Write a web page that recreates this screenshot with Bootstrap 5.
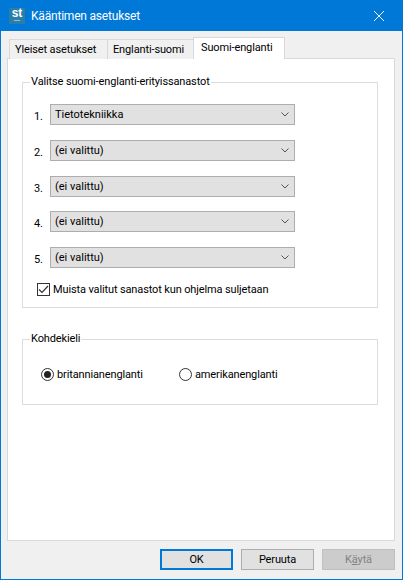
<!DOCTYPE html>
<html lang="fi">
<head>
    <meta charset="UTF-8">
    <meta name="viewport" content="width=device-width, initial-scale=1.0">
    <title>Kääntimen asetukset</title>
    <link href="https://cdn.jsdelivr.net/npm/bootstrap@5.3.0/dist/css/bootstrap.min.css" rel="stylesheet">
    <style>
        html, body {
            height: 100%;
            margin: 0;
            overflow: hidden;
        }
        body {
            background: #f0f0f0;
            color: #000;
            font: 11px/16px Roboto, "Liberation Sans", sans-serif;
            letter-spacing: -.13px;
        }
        .win {
            width: 403px;
            height: 580px;
            border: 1px solid #0078d7;
            border-top: 0;
        }
        .win-title {
            height: 31px;
            background: #0078d7;
            color: #fff;
            padding-left: 8px;
        }
        .win-title-text {
            font-size: 12px;
            letter-spacing: -.2px;
            margin-left: 6px;
        }
        .app-icon {
            width: 16px;
            height: 16px;
            background: #2b7ea8;
            color: #fff;
            font: bold 12px/11px "Liberation Sans", sans-serif;
        }
        .app-icon-line {
            width: 6px;
            height: 1px;
            margin-top: 1px;
            background: #8fc0d8;
        }
        .close-x {
            width: 46px;
        }
        .win-body {
            padding: 7px 7px 0 6px;
        }
        .tabs-row {
            border: 0;
            height: 21px;
            padding-left: 3px;
            position: relative;
            z-index: 1;
        }
        .tabs-row .nav-link {
            height: 20px;
            margin-top: 1px;
            padding: 2px 0 0 5px;
            color: #000;
            background: #f0f0f0;
            border: 1px solid #d9d9d9;
            border-bottom: 0;
            border-radius: 0;
            font-size: 11px;
            margin-left: -1px;
        }
        .tabs-row .nav-link.active {
            height: 22px;
            margin-top: -1px;
            padding: 2px 0 0 7px;
            background: #fff;
            border-color: #d9d9d9;
            color: #000;
        }
        .tab-first {
            width: 99px;
        }
        .tab-second {
            width: 87px;
        }
        .tab-third {
            width: 92px;
        }
        .tab-pane-box {
            height: 483px;
            margin-top: -1px;
            background: #fff;
            border: 1px solid #d9d9d9;
            padding: 15px 16px 0 14px;
        }
        .group-box {
            border: 1px solid #dcdcdc;
            padding: 0;
            margin-bottom: 23px;
        }
        .group-box legend {
            font-size: 11px;
            line-height: 16px;
            margin: 0 0 0 7px;
            padding: 0 1px;
        }
        .vocab-group {
            height: 234px;
        }
        .lang-group {
            height: 74px;
        }
        .vocab-rows {
            padding: 14px 0 0 11px;
            row-gap: 14.75px;
        }
        .vocab-num {
            width: 16px;
            padding-top: 5px;
            font-size: 11px;
        }
        .vocab-select {
            width: 245px;
            height: 21px;
            padding: 1px 20px 0 4px;
            font-size: 11px;
            line-height: 18px;
            color: #000;
            background-color: #e1e1e1;
            background-image: url("data:image/svg+xml,%3csvg xmlns='http://www.w3.org/2000/svg' viewBox='0 0 8 5'%3e%3cpath fill='none' stroke='%23555' d='M.5.5 4 4 7.5.5'/%3e%3c/svg%3e");
            background-size: 8px 5px;
            background-position: right 5px center;
            border: 1px solid #adadad;
            border-radius: 0;
        }
        .remember-row {
            min-height: 0;
            padding: 0;
            margin: -2px 0 0 3px;
            white-space: nowrap;
        }
        .form-check-label {
            padding-top: 1px;
        }
        .win-check {
            float: none !important;
            flex: none;
            width: 13px;
            height: 13px;
            margin: 0 3px 0 0 !important;
            background-color: #fff;
            border: 1px solid #333;
        }
        .win-check[type=checkbox] {
            border-radius: 0;
        }
        .win-check:checked {
            background-color: #fff;
            border-color: #333;
        }
        .win-check[type=checkbox]:checked {
            background-image: url("data:image/svg+xml,%3csvg xmlns='http://www.w3.org/2000/svg' viewBox='0 0 13 13'%3e%3cpath fill='none' stroke='%23333' stroke-width='1.2' d='M2 6.5 5 9.5 11 3'/%3e%3c/svg%3e");
            background-size: 13px 13px;
        }
        .win-check[type=radio]:checked {
            background-image: url("data:image/svg+xml,%3csvg xmlns='http://www.w3.org/2000/svg' viewBox='0 0 13 13'%3e%3ccircle cx='6.5' cy='6.5' r='3.5' fill='%23222'/%3e%3c/svg%3e");
            background-size: 13px 13px;
        }
        .lang-row {
            padding: 19px 0 0 18px;
        }
        .lang-row .form-check {
            min-height: 0;
            padding: 0;
            margin: 0;
        }
        .lang-first {
            width: 138px;
        }
        .win-actions {
            padding-top: 8px;
            gap: 8px;
        }
        .win-btn {
            width: 73px;
            height: 21px;
            padding: 0;
            font-size: 11px;
            line-height: 19px;
            letter-spacing: -.13px;
            color: #000;
            background: #e1e1e1;
            border: 1px solid #adadad;
            border-radius: 0;
        }
        .win-btn.is-default {
            border: 2px solid #0078d7;
            line-height: 17px;
        }
        .win-btn:disabled {
            color: #838383;
            background: #ccc;
            border-color: #bfbfbf;
            opacity: 1;
        }
    </style>
</head>
<body>

    <div class="win d-flex flex-column">
        <div class="win-title d-flex align-items-center">
            <div class="app-icon d-flex flex-column align-items-center">st<span class="app-icon-line"></span></div>
            <span class="win-title-text flex-grow-1">Kääntimen asetukset</span>
            <div class="close-x d-flex justify-content-center">
                <svg width="10" height="10" viewBox="0 0 10 10"><path d="M0 0 10 10M10 0 0 10" stroke="#fff" fill="none"/></svg>
            </div>
        </div>

        <div class="win-body flex-grow-1">
            <ul class="nav nav-tabs tabs-row">
                <li class="nav-item"><a class="nav-link tab-first" href="#">Yleiset asetukset</a></li>
                <li class="nav-item"><a class="nav-link tab-second" href="#">Englanti-suomi</a></li>
                <li class="nav-item"><a class="nav-link tab-third active" href="#">Suomi-englanti</a></li>
            </ul>

            <div class="tab-pane-box">
                <fieldset class="group-box vocab-group">
                    <legend class="float-none w-auto">Valitse suomi-englanti-erityissanastot</legend>
                    <div class="vocab-rows d-flex flex-column">
                        <div class="d-flex"><span class="vocab-num">1.</span>
                            <select class="form-select vocab-select"><option>Tietotekniikka</option></select></div>
                        <div class="d-flex"><span class="vocab-num">2.</span>
                            <select class="form-select vocab-select"><option>(ei valittu)</option></select></div>
                        <div class="d-flex"><span class="vocab-num">3.</span>
                            <select class="form-select vocab-select"><option>(ei valittu)</option></select></div>
                        <div class="d-flex"><span class="vocab-num">4.</span>
                            <select class="form-select vocab-select"><option>(ei valittu)</option></select></div>
                        <div class="d-flex"><span class="vocab-num">5.</span>
                            <select class="form-select vocab-select"><option>(ei valittu)</option></select></div>
                        <div class="form-check d-flex align-items-center remember-row">
                            <input class="form-check-input win-check" type="checkbox" id="remember" checked>
                            <label class="form-check-label" for="remember">Muista valitut sanastot kun ohjelma suljetaan</label>
                        </div>
                    </div>
                </fieldset>

                <fieldset class="group-box lang-group">
                    <legend class="float-none w-auto">Kohdekieli</legend>
                    <div class="lang-row d-flex">
                        <div class="form-check d-flex align-items-center lang-first">
                            <input class="form-check-input win-check" type="radio" name="lang" id="lang-gb" checked>
                            <label class="form-check-label" for="lang-gb">britannianenglanti</label>
                        </div>
                        <div class="form-check d-flex align-items-center">
                            <input class="form-check-input win-check" type="radio" name="lang" id="lang-us">
                            <label class="form-check-label" for="lang-us">amerikanenglanti</label>
                        </div>
                    </div>
                </fieldset>
            </div>

            <div class="win-actions d-flex justify-content-end">
                <button type="button" class="btn win-btn is-default">OK</button>
                <button type="button" class="btn win-btn">Peruuta</button>
                <button type="button" class="btn win-btn" disabled>K<u>ä</u>ytä</button>
            </div>
        </div>
    </div>

</body>
</html>
